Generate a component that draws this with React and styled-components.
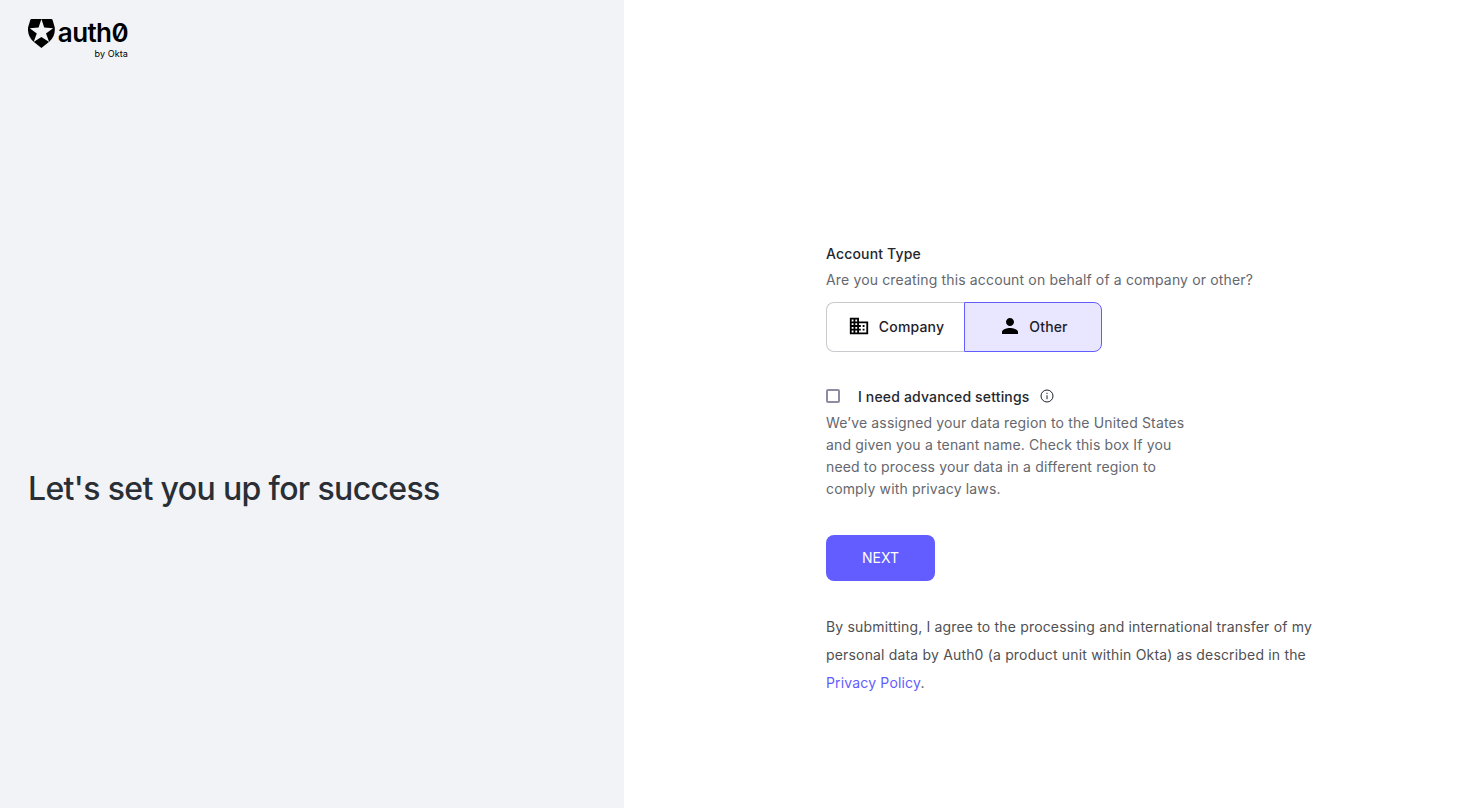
import React, { useState } from "react";
import styled, { createGlobalStyle } from "styled-components";
import { MdBusiness, MdPerson } from "react-icons/md";

const GlobalStyle = createGlobalStyle`
  * { box-sizing: border-box; }
  body {
    margin: 0;
    font-family: Inter, "Liberation Sans", sans-serif;
    font-size: 14px;
    letter-spacing: 0.16px;
    color: #25272c;
    background: #fff;
  }
`;

const Page = styled.div`
  display: flex;
  height: 100vh;
`;

const Aside = styled.aside`
  flex: 0 0 624px;
  display: flex;
  flex-direction: column;
  padding: 19px 28px;
  background: #f1f3f7;
`;

const Logo = styled.div`
  display: flex;
  height: 42px;
  color: #000;
`;

const Shield = styled.svg`
  width: 27px;
  height: 29px;
`;

const Wordmark = styled.div`
  display: flex;
  flex-direction: column;
  align-items: flex-end;
  width: 73px;
`;

const Brand = styled.span`
  font-size: 26px;
  line-height: 28px;
  font-weight: 600;
  letter-spacing: -0.6px;
  font-feature-settings: "zero";
`;

const Byline = styled.span`
  margin-top: 1px;
  font-size: 9px;
  line-height: 12px;
  font-weight: 400;
  letter-spacing: 0.1px;
`;

const Headline = styled.h1`
  margin: 404px 0 0;
  font-size: 32px;
  line-height: 48px;
  font-weight: 500;
  letter-spacing: -0.64px;
  color: #2a2e35;
`;

const Main = styled.main`
  flex: 1;
  padding: 243px 0 0 202px;
`;

const Label = styled.div`
  font-weight: 500;
  line-height: 22px;
`;

const Hint = styled.p`
  width: ${(p) => p.$width || "auto"};
  margin: 4px 0 0;
  line-height: 22px;
  letter-spacing: 0.15px;
  color: #65676e;
`;

const Segments = styled.div`
  display: flex;
  width: 276px;
  height: 50px;
  margin-top: 11px;
`;

const Segment = styled.button`
  flex: 1;
  display: flex;
  align-items: center;
  justify-content: center;
  gap: ${(p) => (p.$side === "left" ? "9px" : "7px")};
  padding: 0 0 2px ${(p) => (p.$side === "left" ? "1px" : 0)};
  border: 1px solid ${(p) => (p.$active ? "#635dff" : "#c9cace")};
  border-radius: ${(p) => (p.$side === "left" ? "8px 0 0 8px" : "0 8px 8px 0")};
  border-right-width: ${(p) => (p.$side === "left" && !p.$active ? 0 : "1px")};
  border-left-width: ${(p) => (p.$side === "right" && !p.$active ? 0 : "1px")};
  background: ${(p) => (p.$active ? "#e9e7ff" : "#fff")};
  font: inherit;
  font-weight: 500;
  letter-spacing: inherit;
  color: #1e212a;

  svg {
    color: #000;
  }
`;

const CheckRow = styled.label`
  display: flex;
  align-items: center;
  height: 22px;
  margin-top: 34px;
`;

const Checkbox = styled.input`
  appearance: none;
  width: 14px;
  height: 14px;
  margin: -2px 18px 0 0;
  border: 2px solid #8e8ba3;
  border-radius: 2px;
  background: #fff;
  &:checked { background: #635dff; }
`;

const InfoIcon = styled.svg`
  width: 14px;
  height: 14px;
  margin: -2px 0 0 10.5px;
`;

const NextButton = styled.button`
  display: block;
  width: 109px;
  height: 46px;
  margin-top: 35px;
  padding: 0 0 1px;
  border: 0;
  border-radius: 8px;
  background: #635dff;
  color: #fff;
  font: inherit;
  letter-spacing: 0;
`;

const Terms = styled.p`
  width: 500px;
  margin: 32px 0 0;
  line-height: 28px;
  letter-spacing: 0.17px;
  color: #4f5053;
`;

const Link = styled.a`
  color: #635dff;
  text-decoration: none;
`;

export default function App() {
  const [type, setType] = useState("other");
  return (
    <Page>
      <GlobalStyle />
      <Aside>
        <Logo>
          <Shield viewBox="0 0 27 29" fill="currentColor">
            <path d="M3.6 0H23.2Q24.3 0 24.6 1L26.7 8.2C27.4 14 25.4 19 21.5 22.6L13.4 29L5.3 22.6C1.4 19-.6 14 .1 8.2L2.3 1Q2.6 0 3.6 0Z" />
            <path
              fill="#f1f3f7"
              d="M13.4 0L16.2 8.6L25.1 9.2L18 14.4L21.2 23.1L13.4 17.9L5.6 23.1L8.8 14.4L1.7 9.2L10.6 8.6Z"
            />
          </Shield>
          <Wordmark>
            <Brand>auth0</Brand>
            <Byline>by Okta</Byline>
          </Wordmark>
        </Logo>
        <Headline>Let's set you up for success</Headline>
      </Aside>
      <Main>
        <Label>Account Type</Label>
        <Hint>Are you creating this account on behalf of a company or other?</Hint>
        <Segments>
          <Segment $side="left" $active={type === "company"} onClick={() => setType("company")}>
            <MdBusiness size={22} />
            Company
          </Segment>
          <Segment $side="right" $active={type === "other"} onClick={() => setType("other")}>
            <MdPerson size={24} />
            Other
          </Segment>
        </Segments>
        <CheckRow>
          <Checkbox type="checkbox" />
          <Label as="span">I need advanced settings</Label>
          <InfoIcon viewBox="0 0 14 14" fill="none" stroke="#1e212a">
            <circle cx="7" cy="7" r="6" />
            <path d="M7 6.2v4M7 3.8v1.2" />
          </InfoIcon>
        </CheckRow>
        <Hint $width="370px">
          We’ve assigned your data region to the United States and given you a tenant name. Check
          this box If you need to process your data in a different region to comply with privacy
          laws.
        </Hint>
        <NextButton>NEXT</NextButton>
        <Terms>
          By submitting, I agree to the processing and international transfer of my personal data by
          Auth0 (a product unit within Okta) as described in the <Link href="#">Privacy Policy</Link>.
        </Terms>
      </Main>
    </Page>
  );
}
